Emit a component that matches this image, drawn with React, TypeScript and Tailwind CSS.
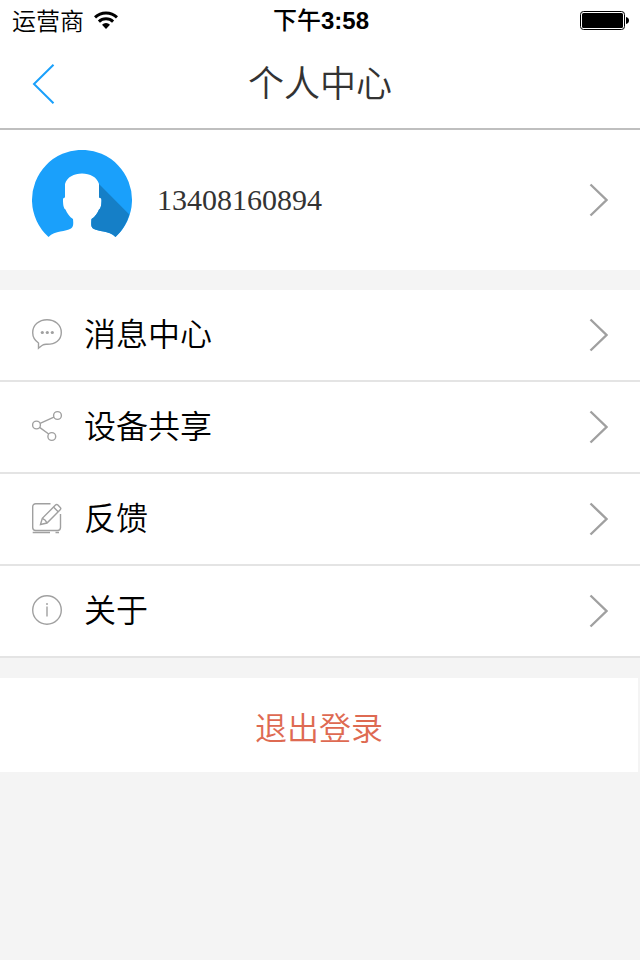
import type { ReactNode } from "react";

function Chevron() {
  return (
    <svg className="h-9 w-5 shrink-0" viewBox="0 0 20 36" fill="none" stroke="#a0a0a0" strokeWidth="2.4" aria-hidden="true">
      <path d="M2.5 2.5 18.5 18 2.5 33.5" />
    </svg>
  );
}

function WifiIcon() {
  return (
    <svg className="h-5 w-6" viewBox="0 0 24 20" fill="none" stroke="#000" strokeWidth="3" aria-label="Wi-Fi">
      <path d="M1 7.4a15.8 15.8 0 0 1 22 0" />
      <path d="M4.9 11.7a10.2 10.2 0 0 1 14.2 0" />
      <path d="M8 14.7a5.8 5.8 0 0 1 8 0L12 19z" fill="#000" stroke="none" />
    </svg>
  );
}

function BatteryIcon() {
  return (
    <svg className="h-5 w-[50px]" viewBox="0 -1 50 20" aria-label="电池">
      <rect x="0.5" y="0.5" width="44" height="18" rx="3" fill="none" stroke="#000" />
      <rect x="2" y="2" width="41" height="15" rx="1.5" />
      <path d="M46 6c2 .4 3 1.500 3 3.500s-1 3.100-3 3.500z" />
    </svg>
  );
}

function Avatar() {
  return (
    <svg className="size-[100px] shrink-0" viewBox="0 0 100 100" aria-hidden="true">
      <path
        d="M16.500 87A50 50 0 1 1 83.500 87C77 80 66 82 61 78.500C59 77 59 74 59.500 69C63 67 65.500 63 67 59.500C69 58.500 69.500 54 69.500 50C69.500 48 68.500 48 67 47.500V34C65 27 58 23.500 50 23.500C42 23.500 35 27 33 34V47.500C31.500 48 31 48 31 50C31 54 31.500 58.500 33.500 59.500C35 63 37.500 67 41 69C41.500 74 41.500 77 39 78.500C34 82 23 80 16.500 87Z"
        fill="#1aa0fb"
      />
      <path
        d="M67 34 97.300 64.500A50 50 0 0 1 83.500 87C77 80 66 82 61 78.500C59 77 59 74 59.500 69C63 67 65.500 63 67 59.500C69 58.500 69.500 54 69.500 50C69.500 48 68.500 48 67 47.500Z"
        fill="#157fc7"
      />
    </svg>
  );
}

function LineIcon({ children }: { children: ReactNode }) {
  return (
    <svg className="size-8 shrink-0" viewBox="0 0 32 32" fill="none" stroke="#a0a0a0" strokeWidth="1.4" aria-hidden="true">
      {children}
    </svg>
  );
}

const items = [
  {
    label: "消息中心",
    icon: (
      <LineIcon>
        <path d="M6.500 25C3 22.500 .7 19 .7 14.700C.7 7 7 1.700 15 1.700S29.300 7 29.300 14.500S23.500 26.300 15 26.300C13 26.300 12 26.200 11 26.800C9.500 27.500 8 29 6.500 30.200Z" />
        <g fill="#a0a0a0" stroke="none">
          <circle cx="10.300" cy="14.500" r="1.600" />
          <circle cx="15.300" cy="14.500" r="1.600" />
          <circle cx="20.300" cy="14.500" r="1.600" />
        </g>
      </LineIcon>
    ),
  },
  {
    label: "设备共享",
    icon: (
      <LineIcon>
        <circle cx="4.500" cy="15" r="3.900" />
        <circle cx="25.500" cy="5.500" r="3.900" />
        <circle cx="19.800" cy="26.500" r="3.900" />
        <path d="M8.100 13.400 21.900 7.200M7.600 17.400 16.700 24" />
      </LineIcon>
    ),
  },
  {
    label: "反馈",
    icon: (
      <LineIcon>
        <path d="M18.500 1.700H3.700A3 3 0 0 0 .7 4.700V25.500A3 3 0 0 0 3.700 28.500H25.500A3 3 0 0 0 28.500 25.500V12" />
        <path d="M8.500 22.500 10.300 16.300 23.500 3.100Q24.700 1.900 25.900 3.100L28.200 5.400Q29.400 6.600 28.200 7.800L15 21Z" />
        <path d="M10.300 16.300 13.200 18.200 15 21M21.500 5.100 26.200 9.800" />
        <path d="M.7 30.500H18M23.500 30.500H27" />
      </LineIcon>
    ),
  },
  {
    label: "关于",
    icon: (
      <LineIcon>
        <circle cx="15" cy="16" r="14.300" />
        <path d="M15 12.500V22.500M15 9V11" />
      </LineIcon>
    ),
  },
];

export default function App() {
  return (
    <div className="min-h-screen bg-[#f4f4f4] font-['Noto_Sans_CJK_SC',sans-serif] text-black">
      <div className="grid h-10 grid-cols-3 items-center bg-white pr-[10px] pl-3 text-2xl">
        <div className="flex items-center gap-[10px] font-[350]">
          <span>运营商</span>
          <WifiIcon />
        </div>
        <time className="text-center font-medium whitespace-nowrap">
          下午<span className="font-['Liberation_Sans',sans-serif] font-bold">3:58</span>
        </time>
        <div className="flex justify-end">
          <BatteryIcon />
        </div>
      </div>

      <header className="grid h-[90px] grid-cols-[1fr_auto_1fr] items-center border-b-2 border-[#bfbfbf] bg-white px-8">
        <button type="button" aria-label="返回" className="w-6">
          <svg className="h-10 w-6" viewBox="0 0 24 40" fill="none" stroke="#1aa0fb" strokeWidth="2" aria-hidden="true">
            <path d="M21.500 .7 2 20 21.500 39.300" />
          </svg>
        </button>
        <h1 className="pb-[6px] text-4xl font-[350] text-[#333]">个人中心</h1>
      </header>

      <main>
        <a href="#profile" className="flex h-[140px] items-center bg-white px-8">
          <Avatar />
          <span className="ml-[25px] flex-1 pb-[2px] font-['Liberation_Serif',serif] text-[30px] text-[#333]">13408160894</span>
          <Chevron />
        </a>

        <nav className="mt-5">
          {items.map((item) => (
            <a
              key={item.label}
              href={"#" + item.label}
              className="flex h-[92px] items-center border-b-2 border-[#e4e4e4] bg-white px-8 text-[32px] font-[350]"
            >
              <span className="flex flex-1 items-center gap-5 pb-[3px]">
                {item.icon}
                <span className="pb-[3px]">{item.label}</span>
              </span>
              <Chevron />
            </a>
          ))}
        </nav>

        <div className="pt-5 pr-[2px]">
          <button type="button" className="h-[94px] w-full bg-white pt-[2px] text-[32px] font-[350] text-[#de6a52]">
            退出登录
          </button>
        </div>
      </main>
    </div>
  );
}
